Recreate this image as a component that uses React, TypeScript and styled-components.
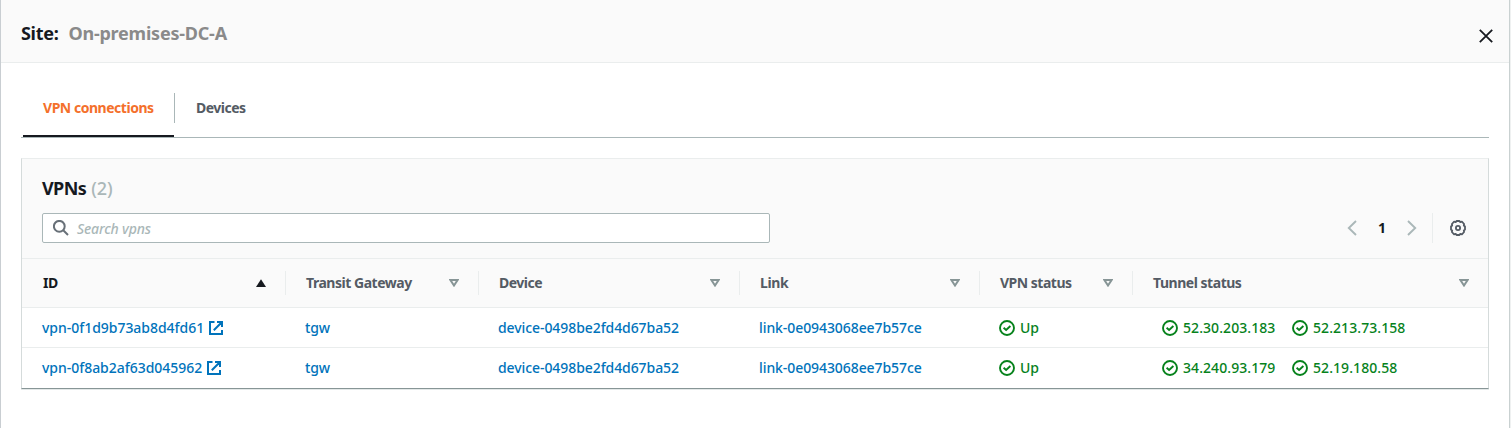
import React from "react";
import styled, { createGlobalStyle } from "styled-components";

const GlobalStyle = createGlobalStyle`
  * { box-sizing: border-box; }
  body {
    margin: 0;
    background: #fff;
    font-family: "Noto Sans", "Open Sans", sans-serif;
    font-size: 14px;
    line-height: 22px;
    color: #16191f;
  }
`;

const Track = styled.span<{ $ls?: number }>`
  letter-spacing: ${(p) => p.$ls ?? 0}px;
  white-space: nowrap;
`;

const Panel = styled.main`
  width: 1510px;
  height: 428px;
  border-left: 1px solid #c9ced2;
  border-right: 1px solid #c9d1d1;
  box-shadow: 1px 0 0 #eff1f1;
  overflow: hidden;
`;

const PanelHeader = styled.header`
  display: flex;
  justify-content: space-between;
  height: 63px;
  padding: 0 16px 0 20px;
  background: #fafafa;
  border-bottom: 1px solid #eaeded;
`;

const SiteTitle = styled.h1`
  display: flex;
  gap: 10px;
  margin: 22px 0 0;
  font-size: 18px;
  line-height: 22px;
  font-weight: 700;
`;

const SiteName = styled(Track)`
  color: #8a8a8a;
`;

const CloseButton = styled.button`
  width: 14px;
  height: 14px;
  margin-top: 29px;
  padding: 0;
  border: 0;
  background: none;
  svg { display: block; }
`;

const Content = styled.div`
  padding: 22px 20px 0;
`;

const TabBar = styled.nav`
  display: flex;
  height: 53px;
  padding-left: 2px;
  border-bottom: 1px solid #aab7b8;
`;

const Tab = styled.a<{ $active?: boolean; $width: number }>`
  display: flex;
  align-items: flex-start;
  width: ${(p) => p.$width}px;
  padding: 12px 0 0 ${(p) => (p.$active ? 20 : 21)}px;
  font-weight: 700;
  color: ${(p) => (p.$active ? "#f4702b" : "#545b64")};
  border-bottom: 2px solid ${(p) => (p.$active ? "#16191f" : "transparent")};
`;

const TabDivider = styled.span`
  width: 1px;
  height: 30px;
  margin-top: 8px;
  background: #aab7b8;
`;

const Card = styled.section`
  margin-top: 20px;
  height: 231px;
  border: 1px solid #d5dbdb;
  border-top-color: #eaeded;
  border-bottom: 1px solid #879596;
  box-shadow: 0 1px 0 #e3e8e8;
  background: #fff;
`;

const CardTop = styled.div`
  height: 100px;
  padding: 18px 20px 0;
  background: #fafafa;
  border-bottom: 1px solid #eaeded;
`;

const CardTitle = styled.h2`
  display: flex;
  gap: 5px;
  margin: 0;
  font-size: 18px;
  line-height: 22px;
  font-weight: 700;
`;

const Count = styled(Track)`
  font-weight: 500;
  color: #aab7b8;
`;

const Tools = styled.div`
  display: flex;
  align-items: center;
  justify-content: space-between;
  margin-top: 14px;
  height: 30px;
`;

const SearchBox = styled.div`
  display: flex;
  align-items: center;
  gap: 8px;
  width: 728px;
  height: 30px;
  padding-left: 10px;
  border: 1px solid #aab7b8;
  border-radius: 2px;
  background: #fff;
  font-style: italic;
  color: #aab7b8;
`;

const Placeholder = styled(Track)`
  padding-top: 2px;
  font-weight: 500;
`;

const Pager = styled.div`
  display: flex;
  align-items: center;
  height: 30px;
`;

const PageNumber = styled.span`
  width: 50px;
  text-align: center;
  font-weight: 700;
`;

const Preferences = styled.div`
  display: flex;
  align-items: center;
  height: 30px;
  margin-left: 15px;
  padding: 0 2px 0 17px;
  border-left: 1px solid #eaeded;
`;

const COLUMNS = "263px 193px 261px 240px 153px 1fr";

const HeadRow = styled.div`
  display: grid;
  grid-template-columns: ${COLUMNS};
  align-items: center;
  height: 49px;
  background: #fafafa;
  border-bottom: 1px solid #eaeded;
`;

const HeadCell = styled.div<{ $first?: boolean; $active?: boolean }>`
  display: flex;
  align-items: center;
  justify-content: space-between;
  height: 24px;
  padding: 0 19px 0 ${(p) => (p.$first ? 21 : 20)}px;
  border-left: ${(p) => (p.$first ? 0 : 1)}px solid #eaeded;
  font-weight: 700;
  color: ${(p) => (p.$active ? "#16191f" : "#545b64")};
`;

const Row = styled.div`
  display: grid;
  grid-template-columns: ${COLUMNS};
  height: 40px;
  font-weight: 500;
  border-bottom: 1px solid #eaeded;
  &:last-child { border-bottom: 0; }
`;

const Cell = styled.div`
  display: flex;
  align-items: center;
  padding-left: 20px;
  color: #0073bb;
`;

const LinkIcon = styled.span`
  display: flex;
  margin-left: 5px;
`;

const Status = styled.span<{ $width?: number }>`
  display: inline-flex;
  align-items: center;
  gap: 5px;
  width: ${(p) => (p.$width ? `${p.$width}px` : "auto")};
  color: #06821b;
`;

const Tunnels = styled.div`
  display: flex;
  align-items: center;
  padding-left: 30px;
`;

const CheckIcon = () => (
  <svg width="16" height="16" viewBox="0 0 16 16" fill="none" stroke="currentColor" strokeWidth="1.9">
    <circle cx="8" cy="8" r="7" />
    <path d="M4.6 7.8 7.1 9.9 11.4 6" />
  </svg>
);

const ExternalIcon = () => (
  <svg width="14" height="14" viewBox="0 0 14 14" fill="none" stroke="currentColor" strokeWidth="2">
    <path d="M5.5 1H1v12h12V9M8 1h5v5M13 1 4.8 9.2" />
  </svg>
);

const SortIcon = ({ active }: { active?: boolean }) =>
  active ? (
    <svg width="10" height="8" viewBox="0 0 10 8">
      <path d="M5 .3 10 8H0Z" fill="#16191f" />
    </svg>
  ) : (
    <svg width="10" height="8" viewBox="0 0 10 8">
      <path d="M1.4 1h7.2L5 6.5Z" fill="none" stroke="#879596" strokeWidth="2" />
    </svg>
  );

const Chevron = ({ right }: { right?: boolean }) => (
  <svg width="10" height="16" viewBox="0 0 10 16" fill="none" stroke="#aab7b8" strokeWidth="1.9">
    <path d={right ? "M1 1 8.2 8 1 15" : "M9 1 1.8 8 9 15"} />
  </svg>
);

const GearIcon = () => (
  <svg width="16" height="16" viewBox="0 0 16 16" fill="none" stroke="#545b64" strokeWidth="1.8">
    <path
      strokeLinejoin="round"
      d="M6.5 1h3l.8 1.1 1.6-.4 2.2 2.3-.3 1.5L15 6.5v3l-1.2 1 .3 1.5-2.2 2.3-1.6-.4-.8 1.1h-3l-.8-1.1-1.6.4L1.9 12l.3-1.5L1 9.5v-3l1.2-1L1.900 4l2.2-2.300 1.600.4Z"
    />
    <circle cx="8" cy="8" r="2.1" />
  </svg>
);

const SearchIcon = () => (
  <svg width="16" height="16" viewBox="0 0 16 16" fill="none" stroke="#687078" strokeWidth="2">
    <circle cx="6.3" cy="6.3" r="5.4" />
    <path d="m10 10 5 5" />
  </svg>
);

const headings = [
  { label: "ID", ls: -0.4 },
  { label: "Transit Gateway", ls: -0.47 },
  { label: "Device", ls: -0.5 },
  { label: "Link", ls: -0.4 },
  { label: "VPN status", ls: -0.5 },
  { label: "Tunnel status", ls: -0.47 },
];

const rows = [
  { id: "vpn-0f1d9b73ab8d4fd61", tunnels: ["52.30.203.183", "52.213.73.158"] },
  { id: "vpn-0f8ab2af63d045962", tunnels: ["34.240.93.179", "52.19.180.58"] },
];

export default function App() {
  return (
    <Panel>
      <GlobalStyle />
      <PanelHeader>
        <SiteTitle>
          <Track $ls={-0.3}>Site:</Track>
          <SiteName $ls={-0.22}>On-premises-DC-A</SiteName>
        </SiteTitle>
        <CloseButton aria-label="Close">
          <svg width="14" height="14" viewBox="0 0 14 14" stroke="#16191f" strokeWidth="1.8">
            <path d="m.8.8 12.4 12.4M13.2.8.8 13.2" />
          </svg>
        </CloseButton>
      </PanelHeader>
      <Content>
        <TabBar>
          <Tab $active $width={151}>
            <Track $ls={-0.47}>VPN connections</Track>
          </Tab>
          <TabDivider />
          <Tab $width={90}>
            <Track $ls={-0.5}>Devices</Track>
          </Tab>
        </TabBar>
        <Card>
          <CardTop>
            <CardTitle>
              <Track $ls={-0.6}>VPNs</Track>
              <Count>(2)</Count>
            </CardTitle>
            <Tools>
              <SearchBox>
                <SearchIcon />
                <Placeholder $ls={-0.15}>Search vpns</Placeholder>
              </SearchBox>
              <Pager>
                <Chevron />
                <PageNumber>1</PageNumber>
                <Chevron right />
                <Preferences>
                  <GearIcon />
                </Preferences>
              </Pager>
            </Tools>
          </CardTop>
          <HeadRow>
            {headings.map((h, i) => (
              <HeadCell key={h.label} $first={i === 0} $active={i === 0}>
                <Track $ls={h.ls}>{h.label}</Track>
                <SortIcon active={i === 0} />
              </HeadCell>
            ))}
          </HeadRow>
          {rows.map((r) => (
            <Row key={r.id}>
              <Cell>
                <Track $ls={-0.03}>{r.id}</Track>
                <LinkIcon>
                  <ExternalIcon />
                </LinkIcon>
              </Cell>
              <Cell>
                <Track $ls={-0.2}>tgw</Track>
              </Cell>
              <Cell>
                <Track $ls={-0.08}>device-0498be2fd4d67ba52</Track>
              </Cell>
              <Cell>
                <Track $ls={-0.08}>link-0e0943068ee7b57ce</Track>
              </Cell>
              <Cell>
                <Status>
                  <CheckIcon />
                  <Track $ls={-0.2}>Up</Track>
                </Status>
              </Cell>
              <Tunnels>
                {r.tunnels.map((ip) => (
                  <Status key={ip} $width={130}>
                    <CheckIcon />
                    <Track $ls={0.07}>{ip}</Track>
                  </Status>
                ))}
              </Tunnels>
            </Row>
          ))}
        </Card>
      </Content>
    </Panel>
  );
}
